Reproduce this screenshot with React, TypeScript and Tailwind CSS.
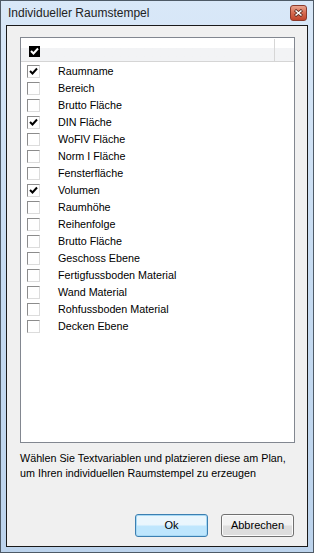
import React from "react"

const fields = [
  { label: "Raumname", checked: true },
  { label: "Bereich", checked: false },
  { label: "Brutto Fläche", checked: false },
  { label: "DIN Fläche", checked: true },
  { label: "WoFlV Fläche", checked: false },
  { label: "Norm I Fläche", checked: false },
  { label: "Fensterfläche", checked: false },
  { label: "Volumen", checked: true },
  { label: "Raumhöhe", checked: false },
  { label: "Reihenfolge", checked: false },
  { label: "Brutto Fläche", checked: false },
  { label: "Geschoss Ebene", checked: false },
  { label: "Fertigfussboden Material", checked: false },
  { label: "Wand Material", checked: false },
  { label: "Rohfussboden Material", checked: false },
  { label: "Decken Ebene", checked: false },
]

function Check({ color = "black" }: { color?: string }) {
  return (
    <svg width="9" height="9" viewBox="0 0 9 9">
      <path d="M1 4 L3.5 6.5 L8 1.5" stroke={color} strokeWidth="2" fill="none" />
    </svg>
  )
}

function RowBox({ checked }: { checked: boolean }) {
  // classic sunken checkbox
  return (
    <div className="w-[13px] h-[13px] border-t border-l border-t-[#8c8c8c] border-l-[#8c8c8c] border-b border-r border-b-[#dcdcdc] border-r-[#dcdcdc] bg-white flex items-center justify-center">
      {checked && <Check />}
    </div>
  )
}

export default function App() {
  return (
    <div
      className="w-[314px] h-[553px] border border-[#4e5a66] bg-gradient-to-b from-[#d9e8f8] via-[#c6dbf1] to-[#bcd3ec] flex flex-col"
      style={{ fontFamily: '"Liberation Sans", Arial, sans-serif' }}
    >
      {/* Title bar */}
      <div className="h-[24px] flex items-start justify-between">
        <span className="pl-[7px] pt-[5px] text-[12px] leading-[14px] text-[#222]">Individueller Raumstempel</span>
        <div className="mt-[4px] mr-[6px] w-[17px] h-[16px] rounded-[3px] border border-[#8b3a2c] bg-gradient-to-b from-[#e9a48f] via-[#d66a50] to-[#c0442b] flex items-center justify-center">
          <svg width="9" height="8" viewBox="0 0 9 8">
            <path d="M1 1 L8 7 M8 1 L1 7" stroke="#5a2a20" strokeWidth="3" />
            <path d="M1.5 1.5 L7.5 6.5 M7.5 1.5 L1.5 6.5" stroke="white" strokeWidth="1.6" />
          </svg>
        </div>
      </div>

      {/* Client area */}
      <div className="flex-1 mx-[5px] mb-[5px] border border-[#1a1a1a] bg-[#f0f0f0] flex flex-col pt-[11px] pl-[13px] pr-[12px]">
        {/* List view */}
        <div className="h-[406px] border border-[#828790] bg-white flex flex-col">
          <div className="h-[24px] flex border-b border-[#d5d5d5] bg-gradient-to-b from-white from-45% to-[#f2f3f5] to-45%">
            <div className="w-[253px] shrink-0 flex items-center pl-[8px] pt-[3px]">
              <div className="w-[11px] h-[11px] bg-black flex items-center justify-center">
                <Check color="white" />
              </div>
            </div>
            <div className="w-[1px] shrink-0 mt-[1px] bg-[#d6d6d6]" />
            <div className="flex-1" />
          </div>
          <div className="pt-[1px]">
            {fields.map((f, i) => (
              <div key={i} className="h-[17px] flex items-center pl-[6px]">
                <RowBox checked={f.checked} />
                <span className="ml-[18px] text-[10.75px] leading-[13px] text-black">{f.label}</span>
              </div>
            ))}
          </div>
        </div>

        <p className="mt-[8px] text-[10.75px] leading-[15px] text-black">
          Wählen Sie Textvariablen und platzieren diese am Plan,
          <br />
          um Ihren individuellen Raumstempel zu erzeugen
        </p>

        <div className="flex-1" />

        <div className="flex justify-end gap-[13px] mb-[9px] mr-[1px]">
          <button className="w-[73px] h-[23px] rounded-[3px] border border-[#3c7fb1] bg-gradient-to-b from-[#eaf6fd] from-45% to-[#bee6fd] to-55% text-[11px] text-black shadow-[inset_0_0_0_1px_#a7d9f5]">
            Ok
          </button>
          <button className="w-[73px] h-[23px] rounded-[3px] border border-[#707070] bg-gradient-to-b from-[#f2f2f2] from-45% to-[#dddddd] to-55% text-[11px] text-black shadow-[inset_0_0_0_1px_#fbfbfb]">
            Abbrechen
          </button>
        </div>
      </div>
    </div>
  )
}
